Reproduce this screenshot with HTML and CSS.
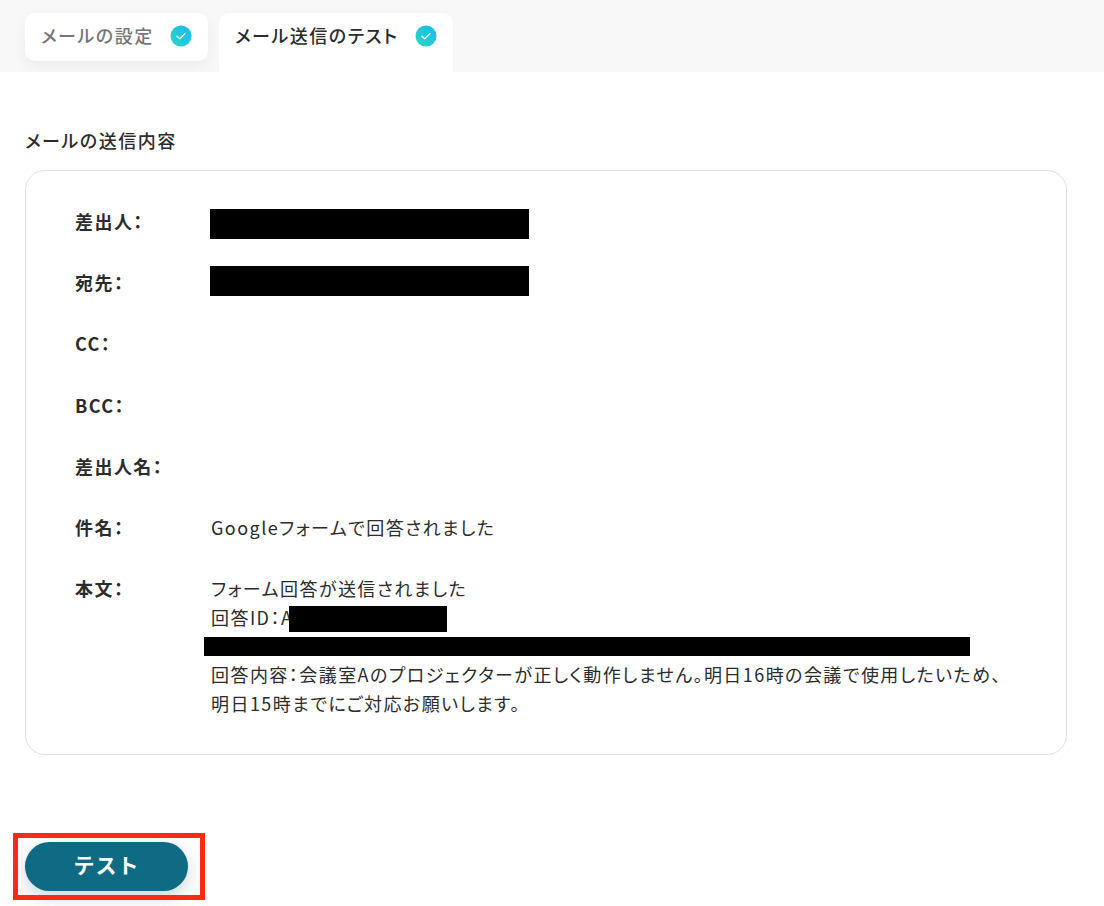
FILE: index.html
```html
<!DOCTYPE html>
<html lang="ja">
<head>
<meta charset="utf-8">
<title>メール送信のテスト</title>
<link rel="stylesheet" href="styles.css">
</head>
<body>
<header class="tabbar">
  <div class="tab tab-idle">
    <span class="tab-label">メールの設定</span>
    <svg class="check" viewBox="0 0 22 22"><defs><linearGradient id="g1" x1="0" y1="1" x2="1" y2="0"><stop offset="0" stop-color="#2ad8c4"/><stop offset="1" stop-color="#1cb8ee"/></linearGradient></defs><circle cx="11" cy="11" r="10.5" fill="url(#g1)"/><path d="M7 11.2l2.8 2.7L15 8.6" fill="none" stroke="#fff" stroke-width="1.3" stroke-linecap="round" stroke-linejoin="round"/></svg>
  </div>
  <div class="tab tab-active">
    <span class="tab-label">メール送信のテスト</span>
    <svg class="check" viewBox="0 0 22 22"><defs><linearGradient id="g2" x1="0" y1="1" x2="1" y2="0"><stop offset="0" stop-color="#2ad8c4"/><stop offset="1" stop-color="#1cb8ee"/></linearGradient></defs><circle cx="11" cy="11" r="10.5" fill="url(#g2)"/><path d="M7 11.2l2.8 2.7L15 8.6" fill="none" stroke="#fff" stroke-width="1.3" stroke-linecap="round" stroke-linejoin="round"/></svg>
  </div>
</header>
<main class="content">
  <h2 class="section-title">メールの送信内容</h2>
  <section class="card">
    <div class="row"><div class="label">差出人：</div><div class="value"><span class="redact redact-addr"></span></div></div>
    <div class="row"><div class="label">宛先：</div><div class="value"><span class="redact redact-addr redact-addr-2"></span></div></div>
    <div class="row"><div class="label">CC：</div><div class="value"></div></div>
    <div class="row"><div class="label">BCC：</div><div class="value"></div></div>
    <div class="row"><div class="label">差出人名：</div><div class="value"></div></div>
    <div class="row"><div class="label">件名：</div><div class="value">Googleフォームで回答されました</div></div>
    <div class="row"><div class="label">本文：</div>
      <div class="value body-text">
        <div>フォーム回答が送信されました</div>
        <div class="id-line">回答ID：A<span class="redact redact-id"></span></div>
        <div class="line-redact"><span class="redact redact-long"></span></div>
        <div class="body-last">回答内容：会議室Aのプロジェクターが正しく動作しません。明日16時の会議で使用したいため、<br>明日15時までにご対応お願いします。</div>
      </div>
    </div>
  </section>
  <div class="actions">
    <button class="btn" type="button">テスト</button>
    <div class="highlight"></div>
  </div>
</main>
</body>
</html>
```
FILE: styles.css
```css
* { box-sizing: border-box; }
html, body { margin: 0; padding: 0; }
body {
  width: 1104px;
  height: 906px;
  overflow: hidden;
  background: #fff;
  color: #2b2b2b;
  font-family: "Noto Sans CJK JP", "Noto Sans", sans-serif;
}
.tabbar {
  height: 72px;
  background: #f8f8f8;
  display: flex;
  align-items: flex-start;
  gap: 11px;
  padding: 13px 0 0 25px;
  overflow: hidden;
}
.tab {
  display: flex;
  align-items: flex-start;
  background: #fff;
  font-size: 18px;
  font-weight: 500;
  padding: 10px 16px 0;
  height: 48px;
  border-radius: 10px;
  font-feature-settings: "palt";
  letter-spacing: 1.5px;
}
.tab-idle {
  width: 183px;
  color: #767676;
  justify-content: space-between;
  box-shadow: 0 6px 14px rgba(0, 0, 0, 0.05);
}
.tab-active {
  width: 234px;
  height: 59px;
  color: #2b2b2b;
  justify-content: space-between;
  border-radius: 10px 10px 0 0;
}
.tab-label { line-height: 25px; }
.check { width: 22px; height: 22px; flex: none; margin-top: 2px; }
.content { padding: 0 37px 0 25px; }
.section-title {
  margin: 53px 0 15px;
  font-size: 18px;
  font-weight: 500;
  line-height: 30px;
  font-feature-settings: "palt";
  letter-spacing: 1.5px;
}
.card {
  height: 585px;
  border: 1px solid #e2e2e2;
  border-radius: 20px;
  padding: 36px 40px 0 49px;
}
.row {
  display: grid;
  grid-template-columns: 136px 1fr;
  min-height: 61.2px;
  font-size: 18px;
  line-height: 29px;
  font-feature-settings: "palt";
  letter-spacing: 1.45px;
}
.label { font-weight: 700; }
.value { white-space: nowrap; }
.redact { display: block; background: #000; }
.redact-addr { width: 319px; height: 30px; margin: 2px 0 0 -1px; }
.redact-addr-2 { margin-top: -2px; }
.id-line { position: relative; height: 29px; }
.redact-id {
  position: absolute;
  left: 78px;
  top: 3px;
  width: 158px;
  height: 26px;
}
.line-redact { position: relative; height: 28px; }
.redact-long {
  position: absolute;
  left: -7px;
  top: 5px;
  width: 766px;
  height: 19px;
}
.body-last { line-height: 28.5px; }
.actions {
  position: relative;
  margin-top: 87px;
  width: 163px;
}
.btn {
  display: block;
  width: 163px;
  height: 49px;
  border: 0;
  border-radius: 25px;
  background: #0f6a84;
  color: #fff;
  font-family: inherit;
  font-size: 21px;
  font-weight: 700;
  line-height: 1;
  letter-spacing: 1px;
  padding: 0 0 4px;
  box-shadow: 0 6px 18px rgba(30, 60, 90, 0.22);
}
.highlight {
  position: absolute;
  left: -12px;
  top: -9px;
  width: 192px;
  height: 67px;
  border: 5px solid #fb2a12;
  pointer-events: none;
}
```
